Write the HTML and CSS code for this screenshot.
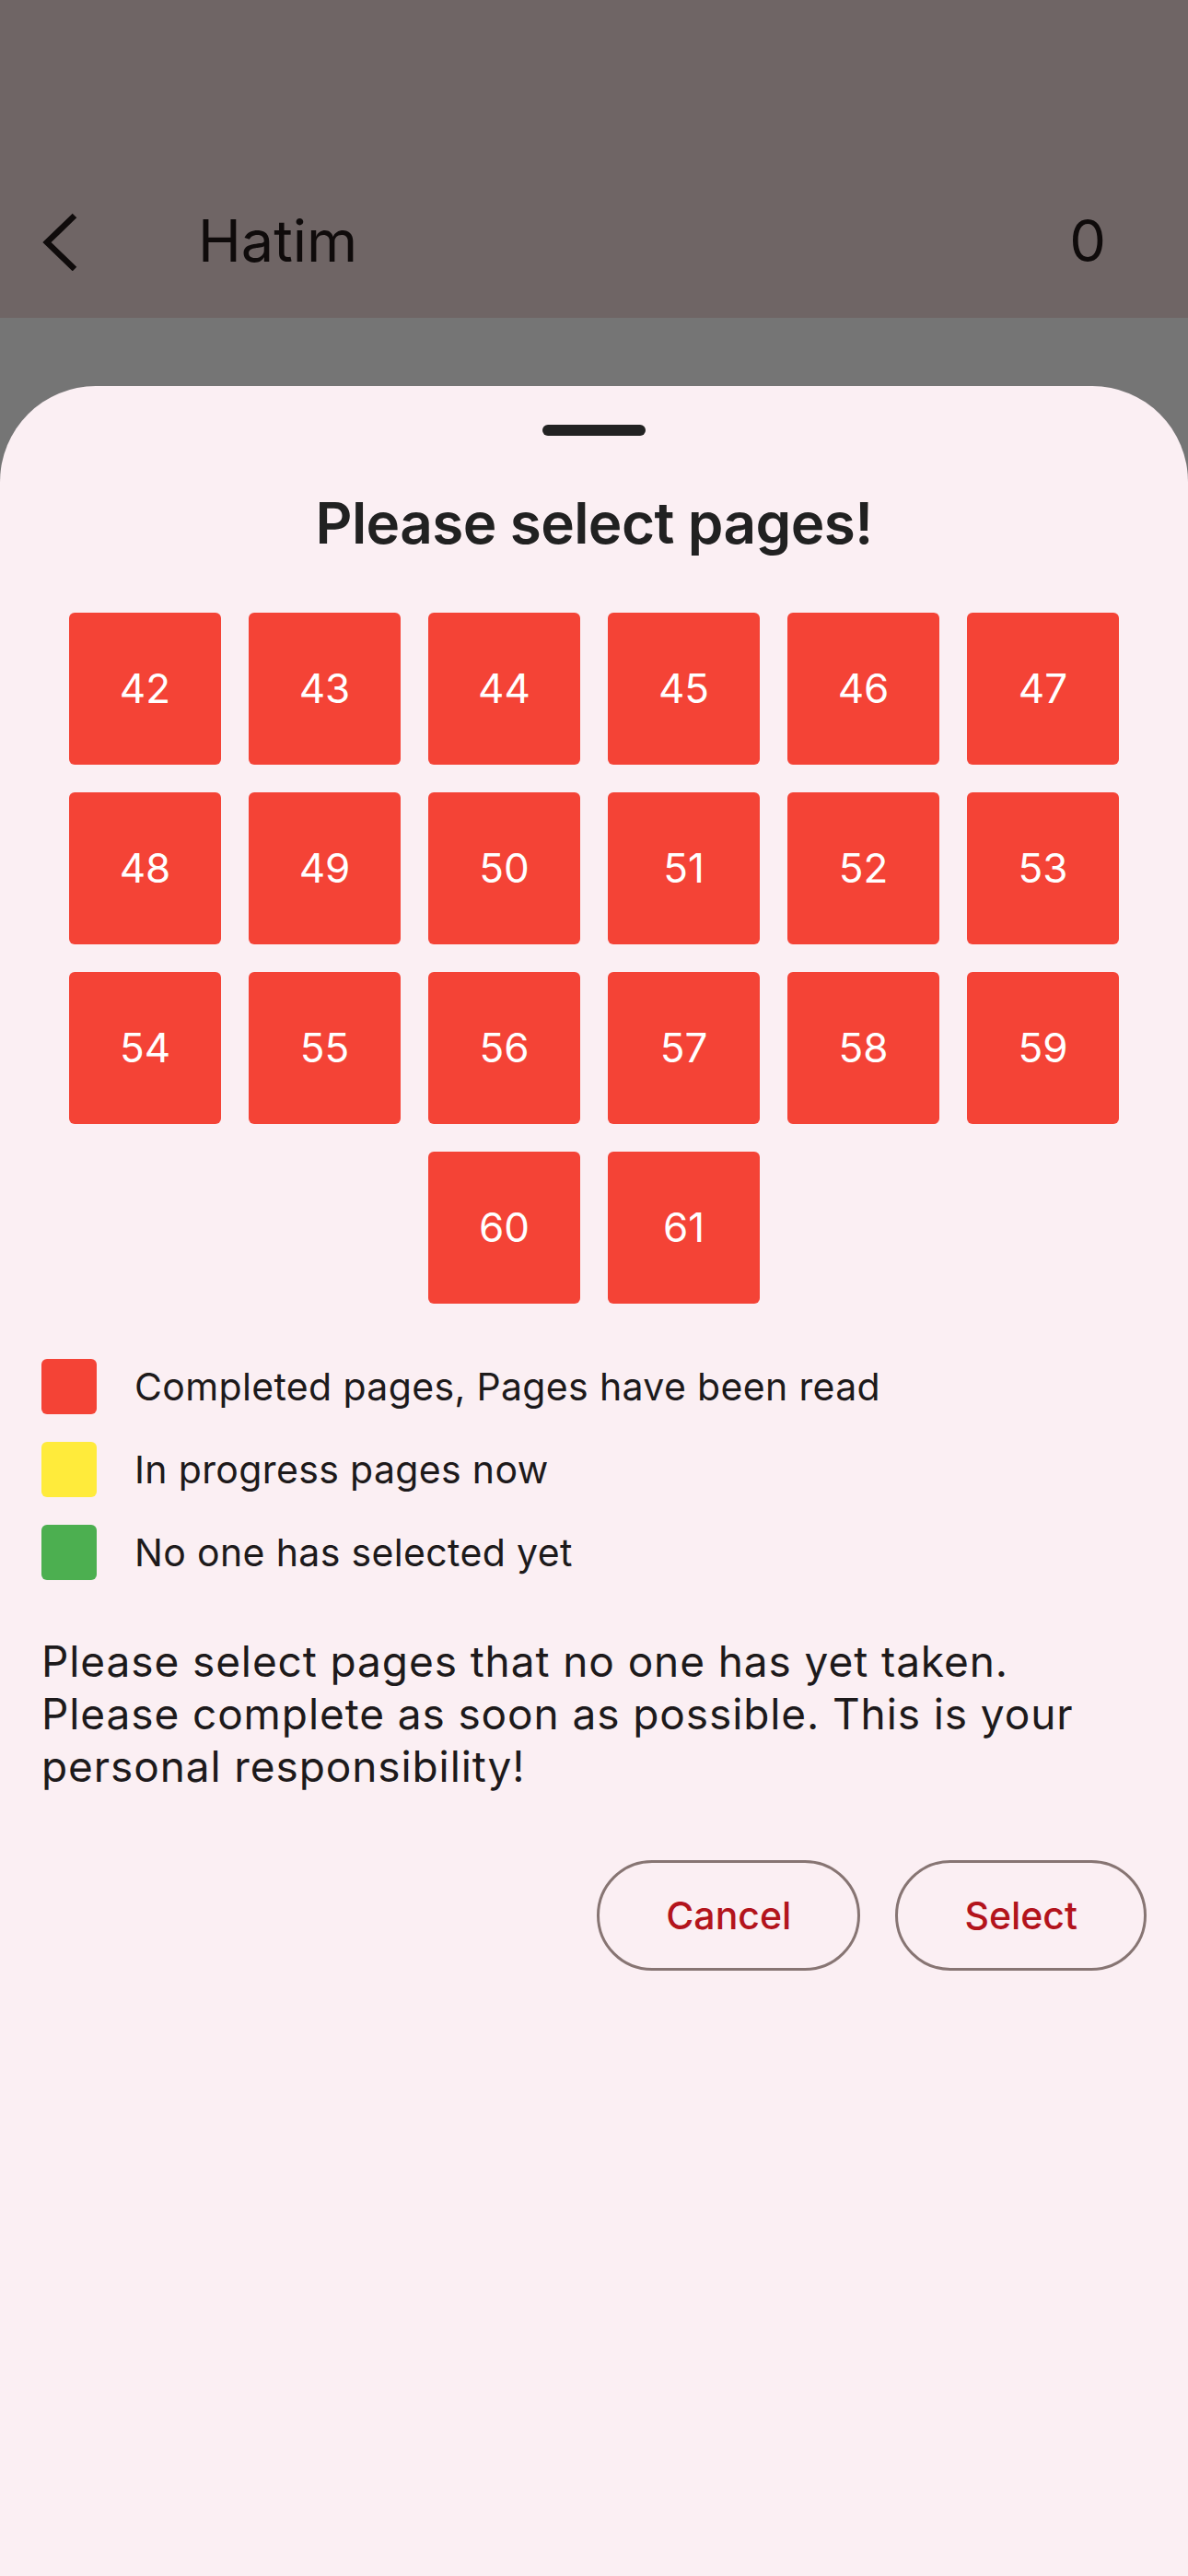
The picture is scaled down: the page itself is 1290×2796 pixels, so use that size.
FILE: index.html
```html
<!DOCTYPE html>
<html lang="en">
<head>
<meta charset="utf-8">
<title>Hatim</title>
<link rel="stylesheet" href="styles.css">
</head>
<body>
<header class="appbar">
  <div class="toolbar">
    <span class="back" aria-label="Back">
      <svg width="40" height="64" viewBox="0 0 40 64"><polyline points="36,4 6,33 36,62" fill="none" stroke="#0f0b0b" stroke-width="6.5" stroke-linejoin="miter"/></svg>
    </span>
    <span class="title">Hatim</span>
    <span class="count">0</span>
  </div>
</header>
<div class="gap"></div>
<section class="sheet">
  <div class="handle"></div>
  <h1 class="sheet-title">Please select pages!</h1>
  <div class="pages">
    <div class="page done">42</div>
    <div class="page done">43</div>
    <div class="page done">44</div>
    <div class="page done">45</div>
    <div class="page done">46</div>
    <div class="page done">47</div>
    <div class="page done">48</div>
    <div class="page done">49</div>
    <div class="page done">50</div>
    <div class="page done">51</div>
    <div class="page done">52</div>
    <div class="page done">53</div>
    <div class="page done">54</div>
    <div class="page done">55</div>
    <div class="page done">56</div>
    <div class="page done">57</div>
    <div class="page done">58</div>
    <div class="page done">59</div>
    <div class="page done">60</div>
    <div class="page done">61</div>
  </div>
  <ul class="legend">
    <li><span class="swatch red"></span><span>Completed pages, Pages have been read</span></li>
    <li><span class="swatch yellow"></span><span>In progress pages now</span></li>
    <li><span class="swatch green"></span><span>No one has selected yet</span></li>
  </ul>
  <p class="note">Please select pages that no one has yet taken.<br>Please complete as soon as possible. This is your personal responsibility!</p>
  <div class="actions">
    <button class="btn">Cancel</button>
    <button class="btn">Select</button>
  </div>
</section>
</body>
</html>
```

FILE: styles.css
```css
* { box-sizing: border-box; }
html, body {
  margin: 0;
  padding: 0;
}
body {
  width: 1290px;
  min-height: 2796px;
  background: #757575;
  font-family: Inter, Roboto, "Noto Sans", "Liberation Sans", sans-serif;
  color: #1e1b1c;
  overflow: hidden;
}
.appbar {
  height: 345px;
  background: #6f6565;
  padding-top: 177px;
}
.toolbar {
  height: 168px;
  display: flex;
  align-items: center;
  padding-left: 45px;
  padding-right: 89px;
  color: #0f0b0b;
}
.back {
  display: flex;
  width: 40px;
  height: 64px;
  margin-top: 2px;
}
.title {
  margin-left: 130px;
  font-size: 63px;
  line-height: 1;
  flex: 1;
}
.count {
  font-size: 63px;
  line-height: 1;
}
.gap {
  height: 74px;
}
.sheet {
  background: #fbeff3;
  border-radius: 104px 104px 0 0;
  min-height: 2377px;
  padding: 42px 45px 40px;
}
.handle {
  width: 112px;
  height: 12px;
  border-radius: 6px;
  background: #222;
  margin: 0 auto;
}
.sheet-title {
  margin: 57px 0 0;
  text-align: center;
  font-size: 62px;
  line-height: 76px;
  font-weight: 600;
  letter-spacing: -0.6px;
  color: #212121;
}
.pages {
  margin-top: 59px;
  display: flex;
  flex-wrap: wrap;
  justify-content: center;
  gap: 30px;
  padding: 0 30px;
}
.page {
  width: 165px;
  height: 165px;
  border-radius: 6px;
  display: flex;
  align-items: center;
  justify-content: center;
  color: #fff;
  font-size: 44px;
  padding-bottom: 2px;
}
.page.done { background: #f44336; }
.legend {
  list-style: none;
  margin: 60px 0 0;
  padding: 0;
  display: flex;
  flex-direction: column;
  gap: 30px;
}
.legend li {
  display: flex;
  align-items: center;
  gap: 41px;
  font-size: 41px;
  letter-spacing: 0.35px;
  color: #1d1a1b;
}
.swatch {
  width: 60px;
  height: 60px;
  border-radius: 6px;
  flex: none;
}
.swatch.red { background: #f44336; }
.swatch.yellow { background: #ffeb3b; }
.swatch.green { background: #4caf50; }
.note {
  margin: 60px 0 0;
  font-size: 46px;
  line-height: 57px;
  letter-spacing: 0.9px;
  color: #1d1a1b;
}
.actions {
  margin-top: 73px;
  display: flex;
  justify-content: flex-end;
  gap: 38px;
}
.btn {
  height: 120px;
  padding: 0 72px;
  border: 3px solid #877573;
  border-radius: 60px;
  background: transparent;
  color: #b3141c;
  font-family: Inter, Roboto, "Noto Sans", "Liberation Sans", sans-serif;
  font-size: 41px;
  font-weight: 500;
}
```
